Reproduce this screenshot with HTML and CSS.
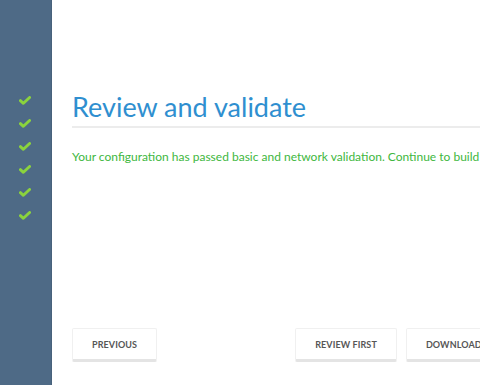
FILE: index.html
```html
<!DOCTYPE html>
<html>
<head>
<meta charset="utf-8">
<link rel="stylesheet" href="styles.css">
</head>
<body>
<div class="app">
  <nav class="sidebar">
    <ul class="steps">
      <li class="step"><svg class="check" viewBox="0 0 12 9" width="12" height="9"><path d="M1.4 4.6 L4.4 7.3 L10.6 1.5" fill="none" stroke="#8bd33d" stroke-width="2.9" stroke-linecap="round" stroke-linejoin="round"/></svg></li>
      <li class="step"><svg class="check" viewBox="0 0 12 9" width="12" height="9"><path d="M1.4 4.6 L4.4 7.3 L10.6 1.5" fill="none" stroke="#8bd33d" stroke-width="2.9" stroke-linecap="round" stroke-linejoin="round"/></svg></li>
      <li class="step"><svg class="check" viewBox="0 0 12 9" width="12" height="9"><path d="M1.4 4.6 L4.4 7.3 L10.6 1.5" fill="none" stroke="#8bd33d" stroke-width="2.9" stroke-linecap="round" stroke-linejoin="round"/></svg></li>
      <li class="step"><svg class="check" viewBox="0 0 12 9" width="12" height="9"><path d="M1.4 4.6 L4.4 7.3 L10.6 1.5" fill="none" stroke="#8bd33d" stroke-width="2.9" stroke-linecap="round" stroke-linejoin="round"/></svg></li>
      <li class="step"><svg class="check" viewBox="0 0 12 9" width="12" height="9"><path d="M1.4 4.6 L4.4 7.3 L10.6 1.5" fill="none" stroke="#8bd33d" stroke-width="2.9" stroke-linecap="round" stroke-linejoin="round"/></svg></li>
      <li class="step"><svg class="check" viewBox="0 0 12 9" width="12" height="9"><path d="M1.4 4.6 L4.4 7.3 L10.6 1.5" fill="none" stroke="#8bd33d" stroke-width="2.9" stroke-linecap="round" stroke-linejoin="round"/></svg></li>
    </ul>
  </nav>
  <main class="content">
    <h1 class="title">Review and validate</h1>
    <p class="status">Your configuration has passed basic and network validation. Continue to build the configuration.</p>
    <div class="actions">
      <button class="btn">PREVIOUS</button>
      <div class="spacer"></div>
      <button class="btn">REVIEW FIRST</button>
      <button class="btn">DOWNLOAD CONFIGURATION</button>
    </div>
  </main>
</div>
</body>
</html>
```
FILE: styles.css
```css
html, body {
  margin: 0;
  padding: 0;
  height: 100%;
  overflow: hidden;
  background: #ffffff;
}
.app {
  display: flex;
  width: 480px;
  height: 385px;
  font-family: "Lato", "Open Sans", sans-serif;
}
.sidebar {
  flex: 0 0 52px;
  background: #4e6a86;
  box-shadow: inset -1px 0 0 #48627c;
}
.steps {
  list-style: none;
  margin: 0;
  padding: 96px 0 0 19px;
  display: flex;
  flex-direction: column;
  gap: 14px;
}
.step {
  height: 9px;
  line-height: 0;
}
.content {
  flex: 1;
  min-width: 0;
  display: flex;
  flex-direction: column;
  padding-left: 20px;
  overflow: hidden;
}
.title {
  margin: 90px 0 0 0;
  font-size: 27px;
  font-weight: 400;
  color: #2f8fd0;
  line-height: 34px;
  padding-bottom: 2px;
  border-bottom: 2px solid #ececec;
  white-space: nowrap;
}
.status {
  margin: 21px 0 0 0;
  font-size: 12px;
  color: #40b740;
  white-space: nowrap;
  line-height: 16px;
}
.actions {
  margin-top: auto;
  margin-bottom: 23px;
  display: flex;
  gap: 9px;
  white-space: nowrap;
}
.spacer {
  flex: 0 0 120px;
}
.btn {
  flex: 0 0 auto;
  height: 34px;
  padding: 0 19px;
  background: #ffffff;
  border: 1px solid #f0f0f0;
  border-bottom: 3px solid #e4e4e4;
  border-radius: 2px;
  font-family: inherit;
  font-size: 9px;
  font-weight: 700;
  color: #565656;
  letter-spacing: 0.1px;
}
```
